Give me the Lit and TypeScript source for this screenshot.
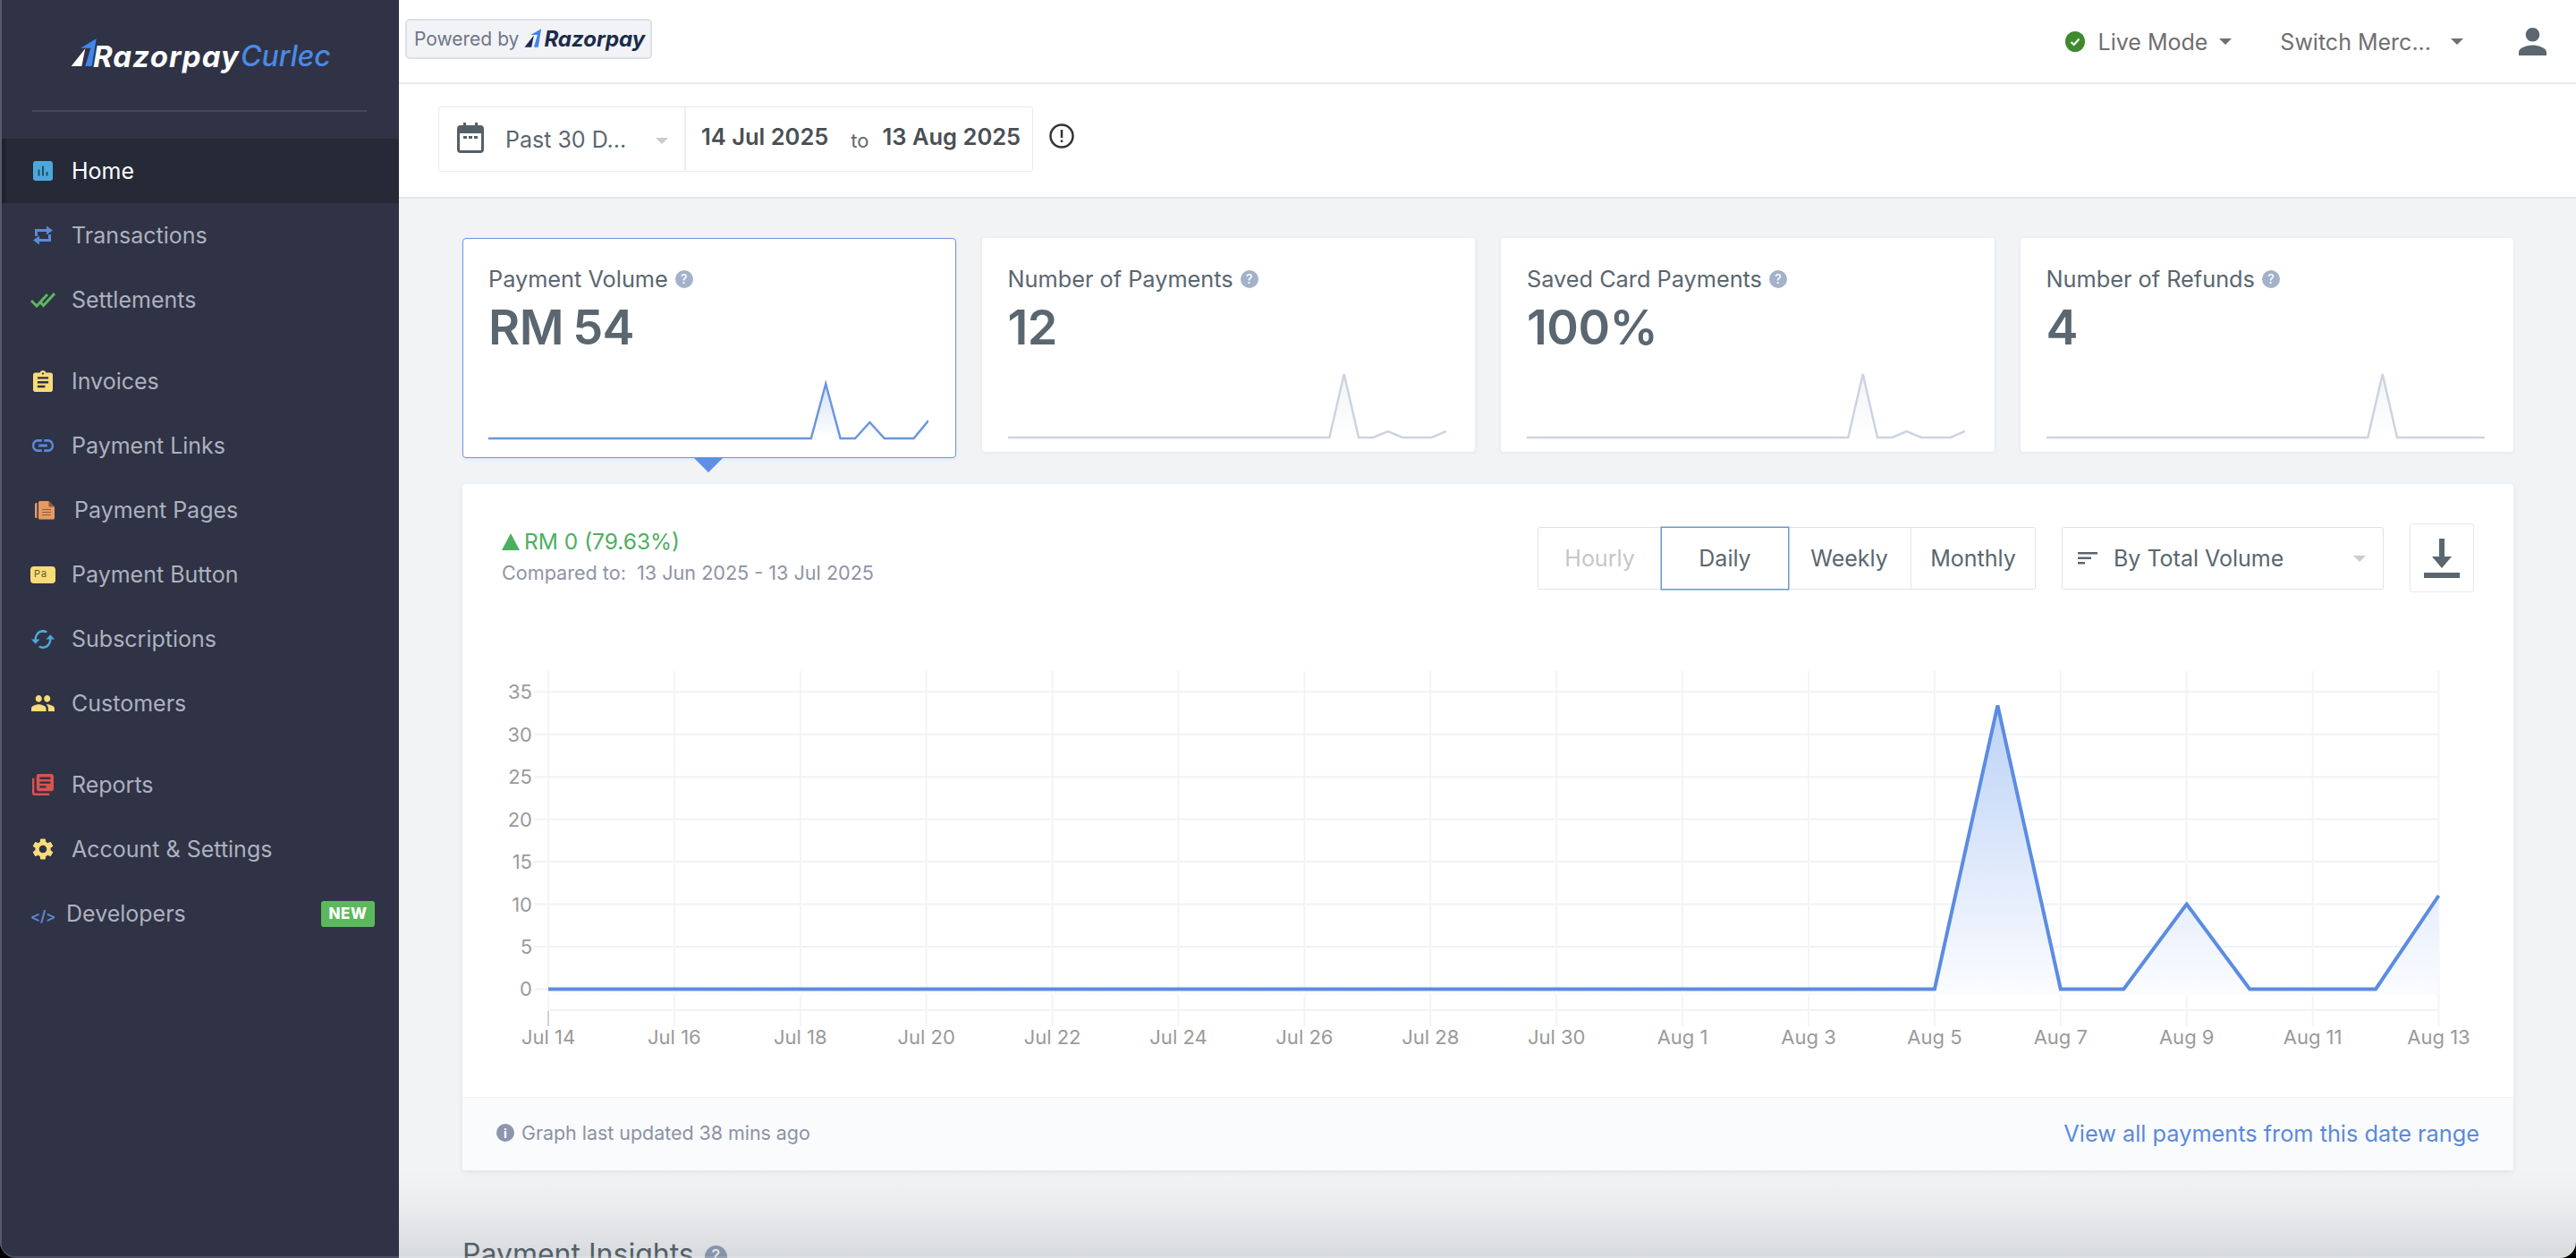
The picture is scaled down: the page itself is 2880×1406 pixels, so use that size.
import { LitElement, html, css, svg } from "lit";
import { customElement } from "lit/decorators.js";

const NAV_GROUPS = [
  [
    { key: "home", label: "Home", active: true },
    { key: "tx", label: "Transactions" },
    { key: "settle", label: "Settlements" },
  ],
  [
    { key: "inv", label: "Invoices" },
    { key: "link", label: "Payment Links" },
    { key: "pages", label: "Payment Pages", cls: "shift" },
    { key: "btn", label: "Payment Button" },
    { key: "sub", label: "Subscriptions" },
    { key: "cust", label: "Customers" },
  ],
  [
    { key: "rep", label: "Reports" },
    { key: "acct", label: "Account & Settings" },
    { key: "dev", label: "Developers", cls: "back", badge: "NEW" },
  ],
];

const ICONS: Record<string, unknown> = {
  home: html`<svg width="22" height="22" viewBox="0 0 22 22"><rect width="22" height="22" rx="3" fill="#4aa9dc"/><path d="M5.5 9.5h2v7h-2zM10 5.5h2v11h-2zM14.5 12h2v4.500h-2z" fill="#2a4a63"/></svg>`,
  tx: html`<svg width="22" height="22" viewBox="0 0 22 22"><path fill="none" stroke="#5b8ad9" stroke-width="3" d="M3.500 12V5.500H16M18.500 10V16.500H6"/><path fill="#5b8ad9" d="M15 0.500 22 5.500 15 10.500zM7 11.500 0 16.500 7 21.500z"/></svg>`,
  settle: html`<svg width="28" height="18" viewBox="0 0 28 18"><path fill="none" stroke="#5cb85c" stroke-width="3" d="M1 10 7 16 19 3M11 11.500 14.500 15.500 27 2"/></svg>`,
  inv: html`<svg width="22" height="24" viewBox="3 1 18 20" preserveAspectRatio="none"><path fill="#f8dc7a" d="M19 3h-4.180C14.400 1.840 13.300 1 12 1c-1.300 0-2.400.84-2.820 2H5c-1.100 0-2 .9-2 2v14c0 1.100.9 2 2 2h14c1.100 0 2-.9 2-2V5c0-1.100-.9-2-2-2zm-7 0c.55 0 1 .45 1 1s-.45 1-1 1-1-.45-1-1 .45-1 1-1zm2 14H7v-2h7v2zm3-4H7v-2h10v2zm0-4H7V7h10v2z"/></svg>`,
  link: html`<svg width="24" height="14" viewBox="2 7 20 10" preserveAspectRatio="none"><path fill="#5b8ad9" d="M3.900 12c0-1.710 1.390-3.100 3.100-3.100h4V7H7c-2.760 0-5 2.240-5 5s2.240 5 5 5h4v-1.900H7c-1.710 0-3.100-1.390-3.100-3.100zM8 13h8v-2H8v2zm9-6h-4v1.900h4c1.710 0 3.100 1.390 3.100 3.100s-1.390 3.100-3.100 3.100h-4V17h4c2.760 0 5-2.240 5-5s-2.240-5-5-5z"/></svg>`,
  pages: html`<svg class="nudge" width="22" height="25" viewBox="0 0 22 25"><path fill="#e59a62" d="M0 5.500a1.500 1.500 0 0 1 1.500-1.500H2.500v17H1.500A1.500 1.500 0 0 1 0 19.500zM4 3.500A1.500 1.500 0 0 1 5.500 2H15.500L22 8.500V21a1.500 1.500 0 0 1-1.500 1.500H5.500A1.500 1.500 0 0 1 4 21z"/><path fill="#8a5a3a" d="M15.500 2 22 8.500H15.500zM8 11h10v1H8zM8 14h10v1H8zM8 17h10v1H8z"/></svg>`,
  btn: html`<span class="pa">Pa</span>`,
  sub: html`<svg width="26" height="21" viewBox="1 4 22 16" preserveAspectRatio="none"><path fill="#4aa9dc" d="M19 8l-4 4h3c0 3.310-2.690 6-6 6-1.010 0-1.970-.25-2.800-.7l-1.460 1.460C8.970 19.540 10.430 20 12 20c4.420 0 8-3.580 8-8h3l-4-4zM6 12c0-3.310 2.690-6 6-6 1.010 0 1.970.25 2.800.7l1.460-1.460C15.030 4.460 13.570 4 12 4c-4.420 0-8 3.580-8 8H1l4 4 4-4H6z"/></svg>`,
  cust: html`<svg width="26" height="18" viewBox="1 5 22 14" preserveAspectRatio="none"><path fill="#f8dc7a" d="M16 11c1.660 0 2.990-1.340 2.990-3S17.660 5 16 5c-1.660 0-3 1.340-3 3s1.340 3 3 3zm-8 0c1.660 0 2.990-1.340 2.990-3S9.660 5 8 5C6.340 5 5 6.340 5 8s1.340 3 3 3zm0 2c-2.330 0-7 1.170-7 3.500V19h14v-2.500c0-2.330-4.670-3.500-7-3.500zm8 0c-.29 0-.62.02-.97.05 1.160.84 1.970 1.970 1.970 3.450V19h6v-2.500c0-2.330-4.670-3.500-7-3.500z"/></svg>`,
  rep: html`<svg width="24" height="24" viewBox="2 2 20 20"><path fill="#d9534f" d="M4 6H2v14c0 1.100.9 2 2 2h14v-2H4V6zm16-4H8c-1.100 0-2 .9-2 2v12c0 1.100.9 2 2 2h12c1.100 0 2-.9 2-2V4c0-1.100-.9-2-2-2zm-1 9H9V9h10v2zm-4 4H9v-2h6v2zm4-8H9V5h10v2z"/></svg>`,
  acct: html`<svg width="24" height="24" viewBox="2.500 2 19 20"><path fill="#f8dc7a" d="M19.140 12.940c.04-.3.06-.61.06-.94 0-.32-.02-.64-.07-.94l2.030-1.580c.18-.14.23-.41.12-.61l-1.920-3.320c-.12-.22-.37-.29-.59-.22l-2.390.96c-.5-.38-1.030-.7-1.620-.94l-.36-2.540c-.04-.24-.24-.41-.48-.41h-3.840c-.24 0-.43.17-.47.41l-.36 2.540c-.59.24-1.130.57-1.620.94l-2.390-.96c-.22-.08-.47 0-.59.22L2.740 8.870c-.12.21-.08.47.12.61l2.030 1.580c-.05.3-.09.63-.09.94s.02.64.07.94l-2.030 1.580c-.18.14-.23.41-.12.61l1.920 3.320c.12.22.37.29.59.22l2.390-.96c.5.38 1.030.7 1.620.94l.36 2.540c.05.24.24.41.48.41h3.840c.24 0 .44-.17.47-.41l.36-2.540c.59-.24 1.130-.56 1.620-.94l2.390.96c.22.08.47 0 .59-.22l1.920-3.320c.12-.22.07-.47-.12-.61l-2.010-1.580zM12 15.600c-1.980 0-3.600-1.620-3.600-3.600s1.620-3.600 3.600-3.600 3.600 1.620 3.600 3.600-1.620 3.600-3.600 3.600z"/></svg>`,
  dev: html`<span class="code">&lt;/&gt;</span>`,
};

const mark = (a: string, b: string, w: number) => html`<svg class="mark" width=${w} height=${w * 1.055} viewBox="55 40 90 95"><path fill=${a} d="M57 133 104 74 92 133z"/><path fill=${b} d="M141 41 88 72 122 72 104 133 126 133z"/></svg>`;

const sparkLine = (vals: number[], w: number, stroke: string, id: string) => {
  const step = w / 30;
  const pts = vals.map((y, i) => `${(i * step).toFixed(1)},${y}`).join(" ");
  return html`<svg class="spark" width=${w} height="80" viewBox="0 0 ${w} 80">
    <defs><linearGradient id=${id} x1="0" y1="0" x2="0" y2="1"><stop offset="0" stop-color=${stroke} stop-opacity=".28"/><stop offset="1" stop-color=${stroke} stop-opacity="0"/></linearGradient></defs>
    <polygon points="0,74 ${pts} ${w},74" fill="url(#${id})"/>
    <polyline points=${pts} fill="none" stroke=${stroke} stroke-width="2.500"/>
  </svg>`;
};

const series = (over: Record<number, number>, base = 74) => Array.from({ length: 31 }, (_, i) => (i in over ? over[i] : base));

const CARDS = [
  { label: "Payment Volume", value: "RM 54", sel: true, w: 492, stroke: "#6a96de", data: series({ 23: 13, 26: 56, 30: 54 }) },
  { label: "Number of Payments", value: "12", w: 490, stroke: "#ccd3e0", data: series({ 23: 3, 26: 67, 30: 67 }) },
  { label: "Saved Card Payments", value: "100%", w: 490, stroke: "#ccd3e0", data: series({ 23: 3, 26: 67, 30: 67 }) },
  { label: "Number of Refunds", value: "4", w: 490, stroke: "#ccd3e0", data: series({ 23: 3 }) },
];

const X0 = 613;
const DX = 70.45;
const Y0 = 1105.4;
const DY = 9.49;
const VALUES = Array.from({ length: 31 }, () => 0);
VALUES[23] = 33.4;
VALUES[26] = 10;
VALUES[30] = 11;
const XLABELS = ["Jul 14", "Jul 16", "Jul 18", "Jul 20", "Jul 22", "Jul 24", "Jul 26", "Jul 28", "Jul 30", "Aug 1", "Aug 3", "Aug 5", "Aug 7", "Aug 9", "Aug 11", "Aug 13"];

function chart() {
  const pts = VALUES.map((v, i) => `${(X0 + i * DX).toFixed(1)},${(Y0 - v * DY).toFixed(1)}`).join(" ");
  const xEnd = X0 + 30 * DX;
  return html`<svg class="plot" width="2294" height="486" viewBox="517 740 2294 486">
    <defs><linearGradient id="area" gradientUnits="userSpaceOnUse" x1="0" y1="790" x2="0" y2="1112"><stop offset="0" stop-color="#bcd2f6"/><stop offset="1" stop-color="#fbfcff"/></linearGradient></defs>
    ${[0, 5, 10, 15, 20, 25, 30, 35].map((v) => {
      const y = Y0 - v * DY;
      return svg`<line x1="597" x2=${xEnd} y1=${y} y2=${y} stroke="#f1f2f7" stroke-width="2"/>
      <text x="595" y=${y + 8} text-anchor="end" class="tick">${v}</text>`;
    })}
    <line x1=${X0} x2=${xEnd} y1="1129" y2="1129" stroke="#f1f2f7" stroke-width="2"/>
    ${XLABELS.map((t, i) => {
      const x = X0 + i * 2 * DX;
      return svg`<line x1=${x} x2=${x} y1="750" y2="1147" stroke="#f3f4f8" stroke-width="2"/>
      <text x=${x} y="1167" text-anchor="middle" class="tick">${t}</text>`;
    })}
    <line x1=${X0} x2=${X0} y1="1130" y2="1147" stroke="#c4c6cc" stroke-width="1.500"/>
    <polygon points="${X0},1112 ${pts} ${xEnd},1112" fill="url(#area)"/>
    <polyline points=${pts} fill="none" stroke="#5b8ce2" stroke-width="4"/>
  </svg>`;
}

@customElement("app-root")
export class AppRoot extends LitElement {
  static styles = css`
    :host { display: block; width: 100vw; height: 100vh; position: relative; overflow: hidden; font-family: Inter, "Noto Sans", sans-serif; color: #5a6670; background: #f1f3f5; }
    * { box-sizing: border-box; }
    .app { display: flex; height: 100%; }
    .side { width: 446px; flex: none; background: #2f3345; border-left: 2px solid #565a6b; display: flex; flex-direction: column; }
    .brand { height: 125px; margin: 0 36px 0 34px; border-bottom: 2px solid #444859; display: flex; align-items: flex-start; padding: 43px 0 0 43px; }
    .brand .mark { flex: none; }
    .brand .rz { font-size: 33px; font-weight: 700; font-style: italic; color: #fff; margin-left: -5px; line-height: 40px; letter-spacing: 1.100px; }
    .brand .cu { font-size: 32px; font-weight: 500; font-style: italic; color: #4a8ae8; margin-left: 1px; line-height: 40px; }
    nav { margin-top: 30px; display: flex; flex-direction: column; gap: 19px; }
    .group { display: flex; flex-direction: column; }
    .item { height: 72px; display: flex; align-items: center; padding-left: 32px; color: #adb1bf; font-size: 25px; font-weight: 400; }
    .item.active { background: #262a37; color: #fff; border-left: 5px solid #20232d; padding-left: 27px; }
    .ico { width: 28px; height: 28px; flex: none; display: flex; align-items: center; justify-content: center; margin-right: 18px; }
    .item .lbl.shift { margin-left: 3px; }
    .item .lbl.back { margin-left: -6px; }
    .nudge { margin-left: 4px; }
    .pa { width: 28px; height: 19px; border-radius: 4px; background: #f8dc7a; color: #6a5a20; font-size: 11px; line-height: 17px; padding-left: 4px; letter-spacing: 1px; }
    .code { color: #5b8ad9; font-size: 17px; font-weight: 600; width: 22px; margin-right: 6px; white-space: nowrap; line-height: 1; margin-top: 6px; letter-spacing: -.5px; }
    .new { margin-left: auto; margin-right: 27px; background: #5cb85c; color: #fff; font-size: 17px; font-weight: 800; width: 60px; height: 29px; border-radius: 3px; display: flex; align-items: center; justify-content: center; letter-spacing: .5px; }

    .main { flex: 1; min-width: 0; display: flex; flex-direction: column; position: relative; }
    .top { height: 94px; flex: none; background: #fff; border-bottom: 2px solid #e8eaec; display: flex; align-items: center; justify-content: space-between; padding: 0 33px 0 7px; box-shadow: 0 1px 2px rgba(0,0,0,.04); }
    .powered { width: 276px; height: 45px; margin-top: -6px; background: #f1f3f6; border: 2px solid #dde0e5; border-radius: 5px; display: flex; align-items: center; padding-left: 8px; font-size: 21px; color: #6f7688; gap: 6px; white-space: nowrap; }
    .powered .rz { color: #1c2b4a; font-style: italic; font-weight: 700; font-size: 24px; margin-left: -4px; }
    .right { display: flex; align-items: center; color: #6f6f6f; font-size: 25px; }
    .right span { position: relative; top: 1px; }
    .live { display: flex; align-items: center; gap: 13px; }
    .live svg { margin-right: 2px; }
    .caret { width: 0; height: 0; border-left: 7px solid transparent; border-right: 7px solid transparent; border-top: 7px solid #6f6f6f; display: inline-block; flex: none; }
    .switch { margin-left: 54px; display: flex; align-items: center; }
    .switch .caret { margin-left: 22px; }
    .user { margin-left: 62px; display: block; }

    .dates { height: 128px; flex: none; background: #fff; border-bottom: 2px solid #e4e6e9; padding: 25px 0 0 44px; display: flex; align-items: flex-start; }
    .dbox { height: 73px; width: 665px; border: 1px solid #e8eaec; border-radius: 3px; display: flex; align-items: stretch; }
    .dsel { width: 276px; flex: none; border-right: 2px solid #eceef0; display: flex; align-items: center; padding-left: 20px; position: relative; font-size: 25px; color: #5a6670; }
    .dsel svg { margin-right: 24px; margin-top: -4px; }
    .dsel .tri { width: 0; height: 0; border-left: 7px solid transparent; border-right: 7px solid transparent; border-top: 7px solid #c9ccd1; margin-left: 33px; margin-top: 3px; }
    .drange { display: flex; align-items: center; padding-left: 17px; color: #4a4f55; font-weight: 600; font-size: 25.500px; white-space: nowrap; padding-bottom: 6px; }
    .drange .to { font-weight: 400; font-size: 22px; margin: 0 15px 0 25px; color: #666; position: relative; top: 4px; }
    .dinfo { margin: 19px 0 0 18px; flex: none; }

    .content { flex: 1; padding: 44px 70px 0 71px; min-height: 0; }
    .cards { display: grid; grid-template-columns: repeat(4, 1fr); gap: 29px; height: 246px; align-items: start; margin-bottom: 29px; }
    .card { height: 239px; background: #fff; border-radius: 4px; box-shadow: 0 1px 4px rgba(40,50,70,.07); padding: 30px 30px 10px 29px; display: flex; flex-direction: column; position: relative; }
    .card.sel { height: 246px; border: 1.500px solid #6d96dc; padding: 29px 28px 15px; }
    .card.sel::after { content: ""; position: absolute; left: 257px; top: 244px; width: 0; height: 0; border-left: 17px solid transparent; border-right: 17px solid transparent; border-top: 17px solid #5f8fe5; }
    .clabel { font-size: 25.300px; line-height: 32px; color: #5a6670; display: flex; align-items: center; gap: 8px; white-space: nowrap; }
    .help { width: 20px; height: 20px; border-radius: 50%; background: #a3b1c9; color: #fff; display: inline-flex; align-items: center; justify-content: center; font-size: 14px; font-weight: 500; flex: none; }
    .cval { font-size: 54px; line-height: 66px; font-weight: 600; color: #5a6670; margin-top: 5px; letter-spacing: -.5px; word-spacing: -3px; }
    .spark { margin-top: auto; display: block; }

    .panel { height: 767px; background: #fff; border-radius: 4px; box-shadow: 0 2px 6px rgba(40,50,70,.08); display: flex; flex-direction: column; overflow: hidden; }
    .phead { height: 199px; flex: none; padding: 44px 44px 0 44px; display: flex; justify-content: space-between; align-items: flex-start; }
    .trend { color: #4caf5f; font-size: 24.500px; line-height: 32px; display: flex; align-items: center; gap: 5px; margin-top: 4px; }
    .trend i { width: 0; height: 0; border-left: 10px solid transparent; border-right: 10px solid transparent; border-bottom: 19px solid #4caf5f; display: block; }
    .cmp { color: #8d94a5; font-size: 21.600px; line-height: 30px; margin-top: 4px; white-space: pre; }
    .ctrls { display: flex; align-items: flex-start; gap: 29px; margin-top: 4px; }
    .seg { display: flex; height: 70px; border: 1.500px solid #dfe2e4; border-radius: 3px; }
    .seg div { display: flex; align-items: center; justify-content: center; font-size: 25px; color: #5a6670; border-right: 1px solid #e3e5e7; }
    .seg div:last-child { border-right: 0; }
    .seg .off { width: 138px; color: #c6c6c6; }
    .seg .on { width: 141px; box-shadow: 0 0 0 1.500px #6d96c8; border-right: 0; }
    .seg .w { width: 138px; }
    .seg .m { width: 138px; }
    .select { width: 360px; height: 70px; border: 1.500px solid #dfe2e4; border-radius: 3px; display: flex; align-items: center; padding-left: 17px; font-size: 25px; color: #5a6670; position: relative; }
    .select svg { margin-right: 18px; }
    .select .tri { margin-left: auto; margin-right: 19px; width: 0; height: 0; border-left: 7px solid transparent; border-right: 7px solid transparent; border-top: 7px solid #c9ccd1; }
    .dl { width: 72px; height: 77px; margin-top: -4px; border: 1.500px solid #e4e6e8; border-radius: 3px; display: flex; align-items: center; justify-content: center; }
    .plot { display: block; flex: none; }
    .tick { font-family: Inter, "Noto Sans", sans-serif; font-size: 22px; fill: #9a9a9a; }
    .pfoot { flex: 1; background: #fafbfd; border-top: 1.500px solid #eff1f4; display: flex; align-items: center; justify-content: space-between; padding: 0 38px 3px 38px; }
    .upd { display: flex; align-items: center; gap: 8px; color: #8a92a6; font-size: 21.400px; }
    .upd .i { width: 20px; height: 20px; border-radius: 50%; background: #8c96ad; color: #fff; font-size: 14px; font-weight: 700; display: inline-flex; align-items: center; justify-content: center; }
    .viewall { color: #5b8ad9; font-size: 25.300px; }
    .ins { margin-top: 74px; font-size: 32px; line-height: 40px; color: #5a6670; display: flex; align-items: center; gap: 12px; white-space: nowrap; }
    .ins .help { width: 25px; height: 25px; font-size: 18px; background: #93a2bc; margin-top: 4px; }

    .vignette { position: absolute; left: 0; right: 0; bottom: 0; height: 100px; background: linear-gradient(to bottom, rgba(30,35,40,0), rgba(30,35,40,.03) 40%, rgba(30,35,40,.12)); pointer-events: none; }
    .frame { position: absolute; inset: 0; border-radius: 0 0 18px 18px; box-shadow: 0 0 0 24px #000, inset 0 -2px 0 rgba(255,255,255,.14); pointer-events: none; }
  `;

  render() {
    return html`<div class="app">
      <aside class="side">
        <div class="brand">${mark("#fff", "#3f86ec", 30)}<span class="rz">Razorpay</span><span class="cu">Curlec</span></div>
        <nav>
          ${NAV_GROUPS.map(
            (g) => html`<div class="group">
              ${g.map(
                (n) => html`<div class="item ${n.active ? "active" : ""}">
                  <span class="ico">${ICONS[n.key]}</span>
                  <span class="lbl ${n.cls || ""}">${n.label}</span>
                  ${n.badge ? html`<span class="new">${n.badge}</span>` : ""}
                </div>`
              )}
            </div>`
          )}
        </nav>
      </aside>
      <div class="main">
        <header class="top">
          <div class="powered">Powered by ${mark("#1c2b4a", "#3f86ec", 20)}<span class="rz">Razorpay</span></div>
          <div class="right">
            <div class="live">
              <svg width="22" height="23" viewBox="0 0 22 23"><ellipse cx="11" cy="11.500" rx="11" ry="11.500" fill="#3f8a2e"/><path d="M6.500 12l3.200 3 5.800-6.500" fill="none" stroke="#fff" stroke-width="2.200"/></svg>
              <span>Live Mode</span><i class="caret"></i>
            </div>
            <div class="switch"><span>Switch Merc...</span><i class="caret"></i></div>
            <svg class="user" width="31" height="31" viewBox="4 4 16 16" preserveAspectRatio="none"><path fill="#5b6770" d="M12 12c2.210 0 4-1.790 4-4s-1.790-4-4-4-4 1.790-4 4 1.790 4 4 4zm0 2c-2.670 0-8 1.340-8 4v2h16v-2c0-2.660-5.330-4-8-4z"/></svg>
          </div>
        </header>
        <div class="dates">
          <div class="dbox">
            <div class="dsel">
              <svg width="30" height="34" viewBox="0 0 30 34"><path fill="#555f68" d="M7 0h3v3h10V0h3v3h3a4 4 0 0 1 4 4v23a4 4 0 0 1-4 4H4a4 4 0 0 1-4-4V7a4 4 0 0 1 4-4h3zM3 12v18a1 1 0 0 0 1 1h22a1 1 0 0 0 1-1V12zM7 15h4v3H7zM13 15h4v3h-4zM19 15h4v3h-4z"/></svg>
              <span>Past 30 D...</span><i class="tri"></i>
            </div>
            <div class="drange"><span>14 Jul 2025</span><span class="to">to</span><span>13 Aug 2025</span></div>
          </div>
          <svg class="dinfo" width="28" height="28" viewBox="0 0 28 28"><circle cx="14" cy="14" r="12.500" fill="none" stroke="#333" stroke-width="2.500"/><path d="M14 7v9M14 18.500v2.500" stroke="#333" stroke-width="2.500"/></svg>
        </div>
        <div class="content">
          <div class="cards">
            ${CARDS.map(
              (c, i) => html`<div class="card ${c.sel ? "sel" : ""}">
                <div class="clabel">${c.label}<span class="help">?</span></div>
                <div class="cval">${c.value}</div>
                ${sparkLine(c.data, c.w, c.stroke, `sp${i}`)}
              </div>`
            )}
          </div>
          <section class="panel">
            <div class="phead">
              <div>
                <div class="trend"><i></i>RM 0 (79.63%)</div>
                <div class="cmp">Compared to:  13 Jun 2025 - 13 Jul 2025</div>
              </div>
              <div class="ctrls">
                <div class="seg"><div class="off">Hourly</div><div class="on">Daily</div><div class="w">Weekly</div><div class="m">Monthly</div></div>
                <div class="select">
                  <svg width="22" height="14" viewBox="0 0 22 14"><path fill="#5a6670" d="M0 0h22v2.500H0zM0 5.500h15v2.500H0zM0 11h8v2.500H0z"/></svg>
                  <span>By Total Volume</span><i class="tri"></i>
                </div>
                <div class="dl"><svg width="40" height="44" viewBox="0 0 40 44"><path fill="#5a6670" d="M17 0h6v20h8L20 33 9 20h8zM0 38h40v6H0z"/></svg></div>
              </div>
            </div>
            ${chart()}
            <div class="pfoot">
              <div class="upd"><span class="i">i</span><span>Graph last updated 38 mins ago</span></div>
              <div class="viewall">View all payments from this date range</div>
            </div>
          </section>
          <div class="ins">Payment Insights<span class="help">?</span></div>
        </div>
        <div class="vignette"></div>
      </div>
    </div>
    <div class="frame"></div>`;
  }
}
